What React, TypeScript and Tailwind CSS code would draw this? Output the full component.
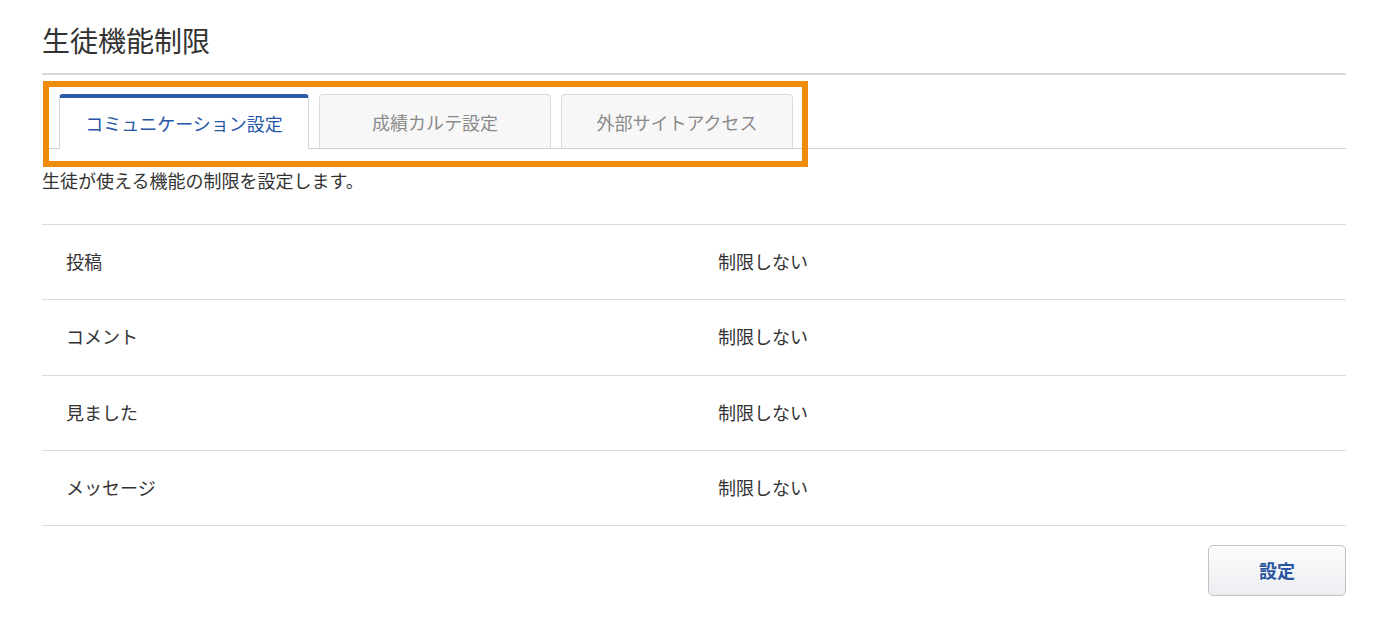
import React from "react";

const rows = ["投稿", "コメント", "見ました", "メッセージ"];

export default function App() {
  return (
    <div
      className="relative w-[1394px] h-[626px] bg-white text-[#333]"
      style={{ fontFamily: '"Noto Sans CJK JP", "Noto Sans", sans-serif' }}
    >
      <div className="pl-[42px] pr-[48px]">
        <h1 className="pt-[20px] text-[28px] leading-[40px] font-normal text-[#333]">生徒機能制限</h1>
        <div className="mt-[13px] h-[2px] bg-[#dadada]" />
        <div className="mt-[19px] flex items-end gap-[10px] pl-[17px] border-b border-[#d0d0d0]">
          <div className="-mb-px w-[250px] h-[55px] flex items-center justify-center bg-white border-x border-[#d6d6d6] border-t-4 border-t-[#2b5bab] border-b border-b-white rounded-t-[4px] text-[18px] leading-[24px] text-[#2756a6]">
            コミュニケーション設定
          </div>
          <div className="w-[232px] h-[54px] flex items-center justify-center bg-[#f7f7f7] border border-b-0 border-[#d9d9d9] rounded-t-[4px] text-[18px] leading-[24px] text-[#8a8a8a]">
            成績カルテ設定
          </div>
          <div className="w-[232px] h-[54px] flex items-center justify-center bg-[#f7f7f7] border border-b-0 border-[#d9d9d9] rounded-t-[4px] text-[18px] leading-[24px] text-[#8a8a8a]">
            外部サイトアクセス
          </div>
        </div>
        <p className="mt-[19px] text-[18px] leading-[24px]">生徒が使える機能の制限を設定します。</p>
        <div className="mt-[32px] border-t border-[#dcdcdc]">
          {rows.map((r, i) => (
            <div
              key={r}
              className={`grid grid-cols-2 items-center border-b border-[#dcdcdc] text-[18px] leading-[24px] pb-[3px] ${i === 1 ? "h-[76px]" : "h-[75px]"}`}
            >
              <div className="pl-[24px]">{r}</div>
              <div className="pl-[24px]">制限しない</div>
            </div>
          ))}
        </div>
        <div className="mt-[19px] flex justify-end">
          <button className="w-[138px] h-[51px] rounded-[5px] border border-[#c2c2c2] bg-gradient-to-b from-[#fafbfc] to-[#eceef1] text-[18px] font-bold text-[#2a55a0]">
            設定
          </button>
        </div>
      </div>
      <div className="absolute left-[43px] top-[81px] w-[765px] h-[86px] border-[6px] border-[#ee8b0b] pointer-events-none" />
    </div>
  );
}
